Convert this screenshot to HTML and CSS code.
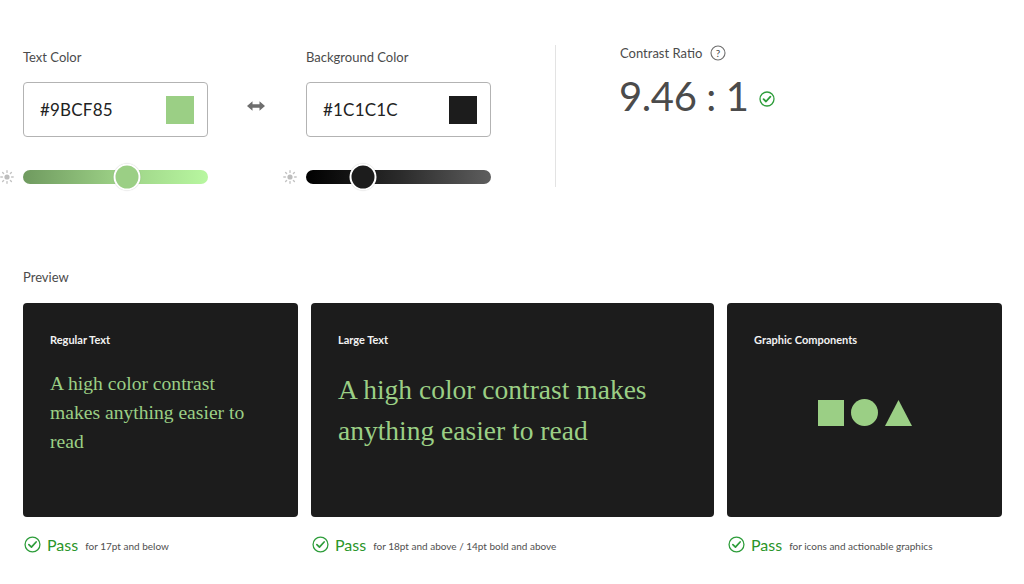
FILE: index.html
```html
<!DOCTYPE html>
<html lang="en">
<head>
    <meta charset="UTF-8">
    <meta name="viewport" content="width=device-width, initial-scale=1.0">
    <title>Contrast Checker</title>
    <link rel="stylesheet" href="styles.css">
</head>
<body>
    <div class="page">
        <section class="controls">
            <div class="picker">
                <div class="field-label">Text Color</div>
                <div class="color-input">
                    <span class="hex">#9BCF85</span>
                    <span class="swatch swatch-fg"></span>
                </div>
                <div class="slider-row">
                    <svg class="sun" width="14" height="14" viewBox="0 0 14 14">
                        <circle cx="7" cy="7" r="2.6" fill="#bdbdbd"/>
                        <g stroke="#c4c4c4" stroke-width="1.4" stroke-linecap="round">
                            <line x1="7" y1="0.8" x2="7" y2="2.4"/>
                            <line x1="7" y1="11.6" x2="7" y2="13.2"/>
                            <line x1="0.8" y1="7" x2="2.4" y2="7"/>
                            <line x1="11.6" y1="7" x2="13.2" y2="7"/>
                            <line x1="2.6" y1="2.6" x2="3.6" y2="3.6"/>
                            <line x1="10.4" y1="10.4" x2="11.4" y2="11.4"/>
                            <line x1="2.6" y1="11.4" x2="3.6" y2="10.4"/>
                            <line x1="10.4" y1="3.6" x2="11.4" y2="2.6"/>
                        </g>
                    </svg>
                    <div class="track track-fg">
                        <span class="thumb thumb-fg" style="left: 56%;"></span>
                    </div>
                </div>
            </div>
            <div class="swap">
                <svg width="18" height="10" viewBox="0 0 18 10">
                    <path d="M0 5 L5.5 0.3 L5.5 3.3 L12.5 3.3 L12.5 0.3 L18 5 L12.5 9.7 L12.5 6.7 L5.5 6.7 L5.5 9.7 Z" fill="#6e6e6e"/>
                </svg>
            </div>
            <div class="picker">
                <div class="field-label">Background Color</div>
                <div class="color-input">
                    <span class="hex">#1C1C1C</span>
                    <span class="swatch swatch-bg"></span>
                </div>
                <div class="slider-row">
                    <svg class="sun" width="14" height="14" viewBox="0 0 14 14">
                        <circle cx="7" cy="7" r="2.6" fill="#bdbdbd"/>
                        <g stroke="#c4c4c4" stroke-width="1.4" stroke-linecap="round">
                            <line x1="7" y1="0.8" x2="7" y2="2.4"/>
                            <line x1="7" y1="11.6" x2="7" y2="13.2"/>
                            <line x1="0.8" y1="7" x2="2.4" y2="7"/>
                            <line x1="11.6" y1="7" x2="13.2" y2="7"/>
                            <line x1="2.6" y1="2.6" x2="3.6" y2="3.6"/>
                            <line x1="10.4" y1="10.4" x2="11.4" y2="11.4"/>
                            <line x1="2.6" y1="11.4" x2="3.6" y2="10.4"/>
                            <line x1="10.4" y1="3.6" x2="11.4" y2="2.6"/>
                        </g>
                    </svg>
                    <div class="track track-bg">
                        <span class="thumb thumb-bg" style="left: 30.6%;"></span>
                    </div>
                </div>
            </div>
            <div class="divider"></div>
            <div class="ratio">
                <div class="ratio-label">
                    Contrast Ratio
                    <svg width="16" height="16" viewBox="0 0 16 16">
                        <circle cx="8" cy="8" r="7" fill="none" stroke="#6e6e6e" stroke-width="1.1"/>
                        <text x="8" y="11.6" text-anchor="middle" font-family="Lato, sans-serif" font-size="10" fill="#4b4b4b">?</text>
                    </svg>
                </div>
                <div class="ratio-value">
                    <span>9.46 : 1</span>
                    <svg class="ok" width="16" height="16" viewBox="0 0 16 16">
                        <circle cx="8" cy="8" r="7" fill="none" stroke="#2d9d3a" stroke-width="1.3"/>
                        <path d="M4.6 8.2 L7 10.5 L11.4 5.6" fill="none" stroke="#2d9d3a" stroke-width="1.8" stroke-linecap="round" stroke-linejoin="round"/>
                    </svg>
                </div>
            </div>
        </section>

        <section class="preview">
            <div class="field-label">Preview</div>
            <div class="cards">
                <div class="card">
                    <div class="card-title">Regular Text</div>
                    <p class="sample sample-regular">A high color contrast makes anything easier to read</p>
                </div>
                <div class="card">
                    <div class="card-title">Large Text</div>
                    <p class="sample sample-large">A high color contrast makes anything easier to read</p>
                </div>
                <div class="card">
                    <div class="card-title">Graphic Components</div>
                    <div class="shapes">
                        <span class="shape-square"></span>
                        <span class="shape-circle"></span>
                        <svg width="27" height="26" viewBox="0 0 27 26"><path d="M13.5 0 L27 26 L0 26 Z" fill="#9bcf85"/></svg>
                    </div>
                </div>
            </div>
            <div class="results">
                <div class="result">
                    <svg width="17" height="17" viewBox="0 0 16 16">
                        <circle cx="8" cy="8" r="7" fill="none" stroke="#2d9d3a" stroke-width="1.2"/>
                        <path d="M4.6 8.2 L7 10.5 L11.4 5.6" fill="none" stroke="#2d9d3a" stroke-width="1.6" stroke-linecap="round" stroke-linejoin="round"/>
                    </svg>
                    <span class="pass">Pass</span>
                    <span class="note">for 17pt and below</span>
                </div>
                <div class="result">
                    <svg width="17" height="17" viewBox="0 0 16 16">
                        <circle cx="8" cy="8" r="7" fill="none" stroke="#2d9d3a" stroke-width="1.2"/>
                        <path d="M4.6 8.2 L7 10.5 L11.4 5.6" fill="none" stroke="#2d9d3a" stroke-width="1.6" stroke-linecap="round" stroke-linejoin="round"/>
                    </svg>
                    <span class="pass">Pass</span>
                    <span class="note">for 18pt and above / 14pt bold and above</span>
                </div>
                <div class="result">
                    <svg width="17" height="17" viewBox="0 0 16 16">
                        <circle cx="8" cy="8" r="7" fill="none" stroke="#2d9d3a" stroke-width="1.2"/>
                        <path d="M4.6 8.2 L7 10.5 L11.4 5.6" fill="none" stroke="#2d9d3a" stroke-width="1.6" stroke-linecap="round" stroke-linejoin="round"/>
                    </svg>
                    <span class="pass">Pass</span>
                    <span class="note">for icons and actionable graphics</span>
                </div>
            </div>
        </section>
    </div>
</body>
</html>
```

FILE: styles.css
```css
* { box-sizing: border-box; }
body { margin: 0; font-family: Lato, "Liberation Sans", sans-serif; background: #fff; color: #4b4b4b; }
.page { width: 1024px; height: 584px; padding: 49px 22px 0 23px; overflow: hidden; }

.controls { display: flex; align-items: flex-start; height: 141px; }
.picker { width: 185px; }
.field-label { font-size: 13px; line-height: 16px; color: #4b4b4b; }
.color-input { margin-top: 17px; height: 55px; border: 1px solid #b3b3b3; border-radius: 4px; display: flex; align-items: center; justify-content: space-between; padding: 0 13px 0 16px; }
.hex { font-size: 17px; color: #222; letter-spacing: 0.2px; }
.swatch { width: 28px; height: 28px; }
.swatch-fg { background: #9bcf85; }
.swatch-bg { background: #1c1c1c; }

.slider-row { display: flex; align-items: center; gap: 9px; margin: 33px 0 0 -23px; height: 14px; }
.sun { flex: none; }
.track { position: relative; flex: 1; height: 14px; border-radius: 7px; }
.track-fg { background: linear-gradient(90deg, #6f9a5f 0%, #9bcf85 50%, #b8f7a0 100%); }
.track-bg { background: linear-gradient(90deg, #000 0%, #2a2a2a 50%, #5e5e5e 100%); }
.thumb { position: absolute; top: 50%; width: 27px; height: 27px; border-radius: 50%; border: 2px solid #fff; transform: translate(-50%, -50%); box-shadow: 0 0 1px rgba(0,0,0,0.25); }
.thumb-fg { background: #9bcf85; }
.thumb-bg { background: #1c1c1c; }

.swap { width: 98px; display: flex; justify-content: center; padding: 52px 2px 0 0; }

.divider { width: 1px; height: 142px; margin: -4px 0 0 64px; background: #e3e3e3; }
.ratio { margin-left: 64px; margin-top: -4px; }
.ratio-label { display: flex; align-items: center; gap: 8px; font-size: 13px; line-height: 16px; }
.ratio-value { display: flex; align-items: center; gap: 10px; margin-top: 8px; margin-left: -1px; }
.ratio-value span { font-size: 40px; line-height: 54px; color: #4b4b4b; letter-spacing: -0.4px; }
.ratio-value .ok { margin-top: 6px; }

.preview { margin-top: 79px; }
.cards { display: grid; grid-template-columns: 275px 1fr 275px; gap: 13px; margin-top: 18px; }
.card { background: #1c1c1c; border-radius: 4px; height: 214px; padding: 30px 27px 0 27px; }
.card-title { font-size: 11px; line-height: 14px; font-weight: 700; color: #f2f2f2; }
.sample { margin: 22px 0 0 0; color: #9bcf85; font-family: "Liberation Serif", "Times New Roman", serif; }
.sample-regular { font-size: 19.6px; line-height: 29px; padding-right: 15px; }
.sample-large { font-size: 27.5px; line-height: 41px; padding-right: 20px; }
.shapes { display: flex; justify-content: center; align-items: center; gap: 7px; margin-top: 52px; }
.shape-square { width: 26px; height: 26px; background: #9bcf85; }
.shape-circle { width: 27px; height: 27px; border-radius: 50%; background: #9bcf85; }

.results { display: grid; grid-template-columns: 275px 1fr 275px; gap: 13px; margin-top: 18px; }
.result { display: flex; align-items: center; gap: 6px; padding-left: 1px; }
.pass { font-size: 16px; color: #2a952a; }
.note { font-size: 10px; color: #505050; margin-left: 1px; margin-top: 3px; }
```
